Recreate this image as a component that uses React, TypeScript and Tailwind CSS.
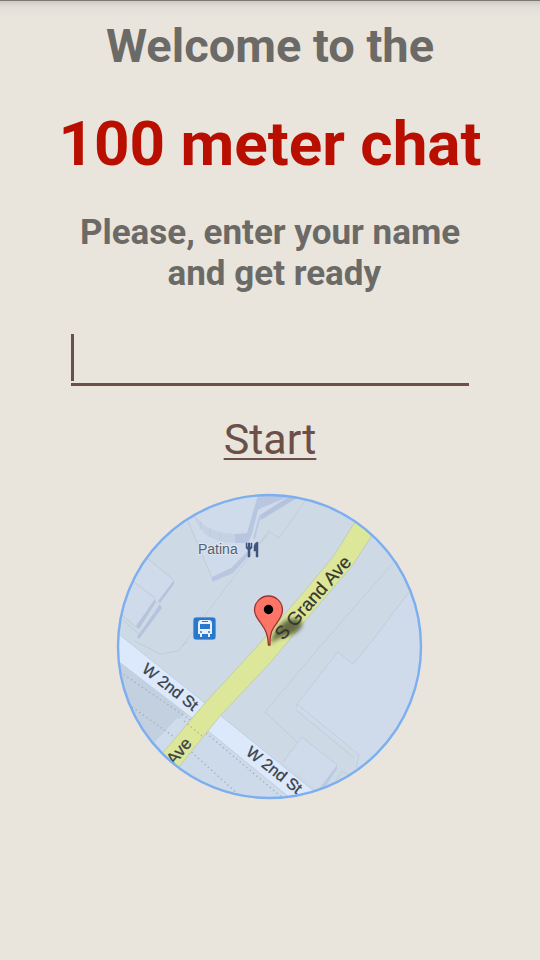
import React from "react";

function MapBadge() {
  return (
    <svg
      viewBox="116 491 308 308"
      role="img"
      aria-label="Map of S Grand Ave and W 2nd St"
      className="h-auto w-[308px] max-w-full"
      fontFamily="'Liberation Sans', Arial, sans-serif"
    >
      <defs>
        <clipPath id="disc">
          <circle cx="269.5" cy="645.5" r="152" />
        </clipPath>
        <filter id="soft" x="-50%" y="-50%" width="200%" height="200%">
          <feGaussianBlur stdDeviation="2.2" />
        </filter>
      </defs>

      <g clipPath="url(#disc)">
        <rect x="110" y="485" width="320" height="320" fill="#cddae6" />

        {/* Buildings north-west */}
        <path d="M187 518 L196 485 H310 L293 498 L262 517 L250 550 L233 568 L212 577 Z" fill="#cfdbeb" />
        <path d="M193 513 L205 525 Q218 532 235 533 V542 Q216 541 206 534 Q198 527 193 513 Z" fill="#c5d2e4" />
        <path d="M235 533 L247 532 L258 494 H293 L261 507 L258 509 L252 533 L248 542 H235 Z" fill="#b9c6e0" />
        <path d="M260 514 L290 495 H300 L261 519 Z" fill="#b5c3de" />
        <path d="M212 576 L231 567 L248 550 L249 554 L233 572 L212 581 Z" fill="#b8c6df" />
        <path d="M260 515 L254 538" fill="none" stroke="#bcc9e0" strokeWidth="2" />
        <path d="M187 518 L212 577 M201 521 v7 M210 528 v8 M220 531 v8" fill="none" stroke="#becbd8" strokeWidth="1" />
        <path d="M147 557 L174 579 L159 600 L154 597 L137 626 L115 606 Z" fill="#cfdbeb" />
        <path d="M174 579 v4 L160 602 l-2 -2 Z M155 598 l1 3 L139 628 l-3 -3 Z M160 603 l2 4 L139 638 l-2 -2 Z" fill="#b5c3dd" />
        <path d="M147 557 L174 579 M134 581 L155 597 M122 614 L137 627 M124 620 L139 633" fill="none" stroke="#bdcad7" strokeWidth="1" />

        {/* Buildings and parcels east */}
        <path d="M338 651 L353 663 L372 640 L409 591 H430 V810 L354 763 L357 754 L296 707 L297 702 Z" fill="#cfdbeb" />
        <path d="M302 736 L337 764 L320 790 L283 761 Z" fill="#cfdbeb" />
        <path d="M337 764 L337 768 L323 789 L319 788 Z" fill="#bccae1" />
        <path
          d="M296 707 L297 703 L338 651 L353 663 L372 640 L409 591 M297 703 L359 754 L356 765 L367 772 M296 709 L354 757 M393 562 L324 641 L265 711 L298 742 M283 761 L302 736 L337 764 M335 781 l7 -11 l7 4 M306 499 L279 537 L270 531 L260 543 M270 528 L182 645 M135 640 L160 653 L178 650 L188 640"
          fill="none"
          stroke="#c0cdd9"
          strokeWidth="1"
        />

        {/* South-west block */}
        <path d="M110 653 L192 717 L296 799 L240 810 L110 760 Z" fill="#cddaea" />
        <path d="M110 653 L186 712 L150 746 L110 730 Z" fill="#c3d0e0" />
        <path d="M177 717 l13 8 l-25 25 l-10 -9 Z" fill="#cfdceb" />

        {/* W 2nd St */}
        <path d="M110 626 L205 702 L330 803 L300 805 L192 717 L110 654 Z" fill="#dce9fd" />
        <path d="M110 626 L205 702 L330 803 M110 654 L192 717 L300 805" fill="none" stroke="#c1cddb" strokeWidth="1" />
        <path d="M120 671 L192 720 L285 799 M132 706 L177 738 L240 795" fill="none" stroke="#a5b1c0" strokeWidth="1.4" strokeDasharray="1.4 3" />

        {/* S Grand Ave */}
        <path
          d="M363 508 L333 556 L302 593 L262 640 L205 702 L150 767 L170 777 L220 715 L270 662 L315 608 L352 565 L382 519 Z"
          fill="#dce79a"
          stroke="#c3ccae"
          strokeWidth="1"
        />
        <path d="M184 720 L202 735" stroke="#b3bc86" strokeWidth="1.4" strokeDasharray="1.4 3" />

        {/* Labels */}
        <g fill="#3b4148" stroke="#3b4148" strokeWidth="0.3">
          <text transform="translate(141 670) rotate(38)" fontSize="16">W 2nd St</text>
          <text transform="translate(245 753) rotate(38)" fontSize="16">W 2nd St</text>
          <text transform="translate(174 765) rotate(-50)" fontSize="17">Ave</text>
        </g>
        <text x="198" y="553" fontSize="14" fill="#58606d" stroke="#dde6f1" strokeWidth="2" paintOrder="stroke">Patina</text>
        <path d="M246 542 h1 v4 h1 v-4 h2 v4 h1 v-4 h1 v5 l-2 2 v7 h-2 v-7 l-2 -2 Z M258 541 v15 h-2 v-6 h-2 v-5 q1 -4 4 -4 Z" fill="#43547f" stroke="#43547f" strokeWidth="0.5" />
      </g>

      {/* Bus stop */}
      <rect x="193" y="616" width="23" height="23" rx="3" fill="#2a78cb" stroke="#bfd6f0" strokeWidth="0.8" />
      <path d="M201 619 h8 q3 0 3 4 v10 h-2 v3 h-2 v-3 h-6 v3 h-2 v-3 h-2 v-10 q0 -4 3 -4 Z" fill="#e8f1fb" />
      <path d="M200 623 h10 v5 h-10 Z M202 620 h6 v1 h-6 Z" fill="#2a78cb" />
      <circle cx="201" cy="631" r="1" fill="#2a78cb" />
      <circle cx="209" cy="631" r="1" fill="#2a78cb" />

      {/* Rim */}
      <circle cx="269.5" cy="645.5" r="151.500" fill="none" stroke="#7daff0" strokeWidth="2.400" />

      {/* Marker with its shadow */}
      <path d="M270 643 Q276 623 289 618 Q302 616 302 624 Q299 633 286 635 Q277 637 270 643 Z" fill="#3f4525" opacity="0.75" filter="url(#soft)" />
      <text transform="translate(283 640) rotate(-48.500)" fontSize="18.500" fill="#34362f" stroke="#34362f" strokeWidth="0.200">S Grand Ave</text>
      <path d="M268.500 644 C268 631 264 627 260 621 C256 616 254.500 613 254.500 609 A14 14 0 0 1 282.500 609 C282.500 613 281 616 277.500 621 C273 627 269.500 631 270 644 Z" fill="#fd7567" stroke="#9b3230" strokeWidth="1.300" />
      <circle cx="268.500" cy="608.500" r="4.700" fill="#000" />
    </svg>
  );
}

export default function App() {
  return (
    <main className="min-h-screen bg-[#e9e5dd] text-center font-['Roboto',sans-serif] text-[#6b6a66]">
      <div className="h-4 border-t border-[#7d7a75] bg-linear-to-b from-[#cfcbc4] via-[#e3dfd7] via-40% to-[#e9e5dd]" />
      <h1 className="font-bold">
        <span className="block text-[47px] leading-[60px]">Welcome to the</span>
        <span className="mt-8 block text-[62px] leading-[72px] text-[#b90f00]">100 meter chat</span>
      </h1>
      <form className="flex flex-col items-center" onSubmit={(e) => e.preventDefault()}>
        <label htmlFor="name" className="mt-8 block max-w-full text-[35px] leading-[41px] font-bold">
          Please, enter your name
          <br />
          &nbsp;and get ready
        </label>
        <div className="relative mt-9 flex w-[398px] max-w-full">
          <input
            id="name"
            type="text"
            autoComplete="off"
            className="h-14 w-full border-b-3 border-[#6b4f48] bg-transparent px-1 text-[35px] text-[#6b4f48] caret-transparent outline-none"
          />
          <span aria-hidden="true" className="absolute top-1 left-0 h-[47px] w-[3px] bg-[#6b4f48]" />
        </div>
        <button
          type="submit"
          className="mt-7 text-[43px] leading-[50px] text-[#6b4f48] underline decoration-2 underline-offset-4"
        >
          Start
        </button>
      </form>
      <div className="mt-7 flex justify-center pb-8">
        <MapBadge />
      </div>
    </main>
  );
}
